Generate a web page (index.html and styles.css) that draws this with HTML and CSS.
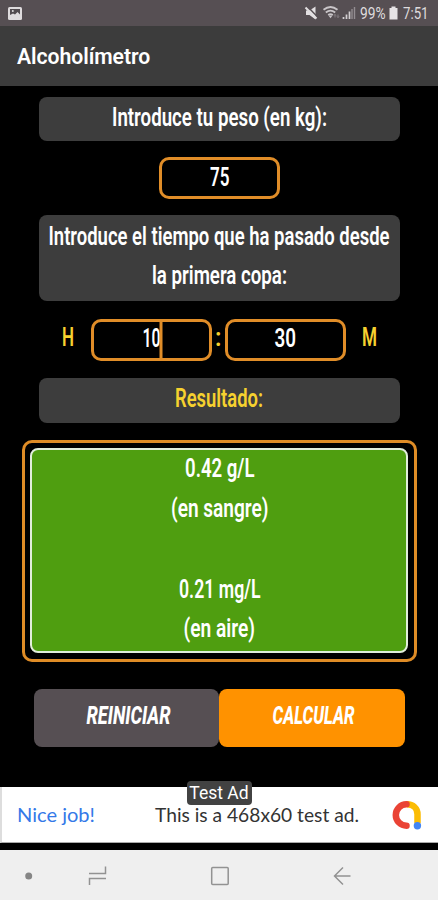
FILE: index.html
```html
<!DOCTYPE html>
<html lang="es">
<head>
<meta charset="utf-8">
<title>Alcoholímetro</title>
<link rel="stylesheet" href="styles.css">
</head>
<body>
<div class="screen">
  <header class="status">
    <svg class="picture-icon" width="14" height="13" viewBox="0 0 14 13"><rect width="14" height="13" rx="1.5" fill="#dedbdd"/><path d="M2 2h10v5.500L9.500 5 7 7.500 5 6.500 2 8z" fill="#514b4f"/><circle cx="4.800" cy="4" r="1" fill="#dedbdd"/></svg>
    <svg class="tray" width="138" height="26" viewBox="300 0 138 26">
      <path d="M306 10.500h3.500l6-4v13l-6-4.500H306z" fill="#e2dfe1"/>
      <path d="M307 6l11.500 12" stroke="#564f53" stroke-width="1.500"/>
      <path d="M305.500 7.500l11 11" stroke="#e2dfe1" stroke-width="2"/>
      <g fill="none" stroke="#c9c5c8" stroke-width="1.800"><path d="M323.500 9.700q7-5.500 14 0M325.800 12.500q4.700-3.800 9.400 0M328.200 15q2.300-1.800 4.600 0"/></g>
      <path d="M328.500 15.500h4l-2 2.800z" fill="#c9c5c8"/>
      <path d="M335 17.500v-3m-1 1 1-1 1 1M338 14.500v3m-1-1 1 1 1-1" stroke="#9a9498" stroke-width=".7" fill="none"/>
      <path d="M343.500 19v-2M346.500 19v-4.500M349.500 19v-7.500" stroke="#d2ced1" stroke-width="1.700"/><path d="M352 19V9M354.500 19V7" stroke="#938d91" stroke-width="1.400"/>
      <text x="360" y="19.300" textLength="25.500" lengthAdjust="spacingAndGlyphs">99%</text>
      <path d="M389.500 8h2V6.500h4V8h2v11.500h-8z" fill="#e6e3e5"/>
      <text x="403" y="19.300" textLength="25.500" lengthAdjust="spacingAndGlyphs">7:51</text>
    </svg>
  </header>
  <h1 class="appbar">Alcoholímetro</h1>
  <main>
    <div class="panel weight-label"><svg class="type" width="361" height="44"><text x="73" y="29" textLength="215" lengthAdjust="spacingAndGlyphs">Introduce tu peso (en kg):</text></svg></div>
    <div class="field weight-field"><svg class="type" width="115" height="36"><text x="48" y="25.500" textLength="19.500" lengthAdjust="spacingAndGlyphs">75</text></svg></div>
    <div class="panel time-label"><svg class="type" width="361" height="85"><text x="9.500" y="29.500" textLength="341" lengthAdjust="spacingAndGlyphs">Introduce el tiempo que ha pasado desde</text><text x="113" y="69" textLength="135" lengthAdjust="spacingAndGlyphs">la primera copa:</text></svg></div>
    <div class="time">
      <svg class="type yellow" width="30" height="42"><text x="1" y="27" textLength="12" lengthAdjust="spacingAndGlyphs">H</text></svg>
      <div class="field"><svg class="type" width="115" height="36"><text x="48.500" y="24.500" textLength="18" lengthAdjust="spacingAndGlyphs">10</text><path class="caret" d="M67 0v36"/></svg></div>
      <svg class="type yellow" width="13" height="42"><text x="3" y="27" textLength="6.500" lengthAdjust="spacingAndGlyphs">:</text></svg>
      <div class="field"><svg class="type" width="115" height="36"><text x="46.500" y="24.500" textLength="21.500" lengthAdjust="spacingAndGlyphs">30</text></svg></div>
      <svg class="type yellow" width="31" height="42"><text x="16" y="27" textLength="15" lengthAdjust="spacingAndGlyphs">M</text></svg>
    </div>
    <div class="panel result-label"><svg class="type yellow" width="361" height="45"><text x="136" y="29" textLength="88" lengthAdjust="spacingAndGlyphs">Resultado:</text></svg></div>
    <div class="result"><div class="reading"><svg class="type" width="374" height="202">
      <text x="153" y="27" textLength="69.500" lengthAdjust="spacingAndGlyphs">0.42 g/L</text>
      <text x="139" y="66.500" textLength="97.500" lengthAdjust="spacingAndGlyphs">(en sangre)</text>
      <text x="147" y="147.500" textLength="81.500" lengthAdjust="spacingAndGlyphs">0.21 mg/L</text>
      <text x="151.500" y="187" textLength="71.500" lengthAdjust="spacingAndGlyphs">(en aire)</text>
    </svg></div></div>
    <div class="actions">
      <button class="reset"><svg class="type slanted" width="185" height="58"><text x="52.500" y="35" textLength="84" lengthAdjust="spacingAndGlyphs">REINICIAR</text></svg></button>
      <button class="calculate"><svg class="type slanted" width="186" height="58"><text x="53.500" y="35" textLength="82" lengthAdjust="spacingAndGlyphs">CALCULAR</text></svg></button>
    </div>
  </main>
  <aside class="ad">
    <span class="ad-tag">Test Ad</span>
    <svg width="438" height="55" viewBox="0 787 438 55">
      <text class="nice" x="17" y="821.500" textLength="78" lengthAdjust="spacingAndGlyphs">Nice job!</text>
      <text class="copy" x="155" y="821.500" textLength="204" lengthAdjust="spacingAndGlyphs">This is a 468x60 test ad.</text>
      <g fill="none" stroke-width="6.500" stroke-linecap="round"><path d="M407 804.300c6 0 10.500 4 10.500 10v9" stroke="#fbbc04" stroke-linecap="butt"/><path d="M406.500 804.300a10.700 10.700 0 0 0 0 21.400" stroke="#ea4335"/></g><circle cx="417.400" cy="825.700" r="3.700" fill="#4285f4"/>
    </svg>
  </aside>
  <nav><svg width="438" height="50" viewBox="0 850 438 50" fill="none" stroke="#929292" stroke-width="1.500">
    <circle cx="28.700" cy="876" r="3.500" fill="#858585" stroke="none"/>
    <path d="M89 873.500h16.500V866.500M106 878.500H89.500V885"/>
    <rect x="211.700" y="867.500" width="16.500" height="17" rx="1"/>
    <path d="M350.500 876H335m8-8.500-8.500 8.500 8.500 8.500"/>
  </svg></nav>
</div>
</body>
</html>
```
FILE: styles.css
```css
* { box-sizing: border-box; }
body { margin: 0; background: #000; font-family: Roboto, sans-serif; }
svg { display: block; }
.screen { width: 438px; height: 900px; background: #000; overflow: hidden; display: flex; flex-direction: column; }
.status { height: 26px; flex: none; background: #564f53; display: flex; align-items: center; justify-content: space-between; padding-left: 7.5px; }
.tray text { font-size: 16px; fill: #dedbdd; }
.appbar { height: 60px; flex: none; margin: 0; padding: 1px 17px 0; background: #3c3c3c; color: #fff; font-size: 21.2px; font-weight: 600; letter-spacing: -.05px; line-height: 60px; }
main { height: 700.5px; flex: none; display: flex; flex-direction: column; align-items: center; padding-top: 10.5px; }
.panel { width: 361px; background: #3d3d3d; border-radius: 8px; flex: none; }
.type { overflow: visible; fill: #fff; font-size: 25.3px; font-weight: 600; }
.yellow { fill: #f6d12f; }
.field { width: 121px; height: 42px; border: 3px solid #e08d28; border-radius: 10px; flex: none; }
.caret { stroke: #e08d28; stroke-width: 3px; }
.weight-label { height: 44.5px; }
.weight-field { margin-top: 16px; }
.time-label { height: 85.5px; margin-top: 16px; }
.time { display: flex; margin-top: 18px; position: relative; left: -.5px; }
.result-label { height: 45px; margin-top: 17.5px; }
.result { width: 395px; height: 222px; margin-top: 16.500px; padding: 5.5px; border: 3px solid #df8c26; border-radius: 10px; flex: none; }
.reading { width: 378px; height: 205px; background: #4f9e10; border: 2px solid #e2eedb; border-radius: 8px; }
.actions { display: flex; margin-top: 27px; }
button { border: 0; padding: 0; height: 58.5px; border-radius: 8px; font-family: inherit; }
.reset { width: 185px; background: #564f53; }
.calculate { width: 186px; background: #ff9200; }
.slanted { font-style: italic; font-weight: 800; }
.ad { position: relative; height: 56px; flex: none; background: #fff; border-left: 2px solid #ddd; border-bottom: 1px solid #aaa; }
.ad svg { margin-left: -2px; }
.ad-tag { position: absolute; left: 184.500px; top: -5.5px; width: 65px; height: 23.5px; border-radius: 4px; background: #424242; color: #fff; font-size: 17.5px; line-height: 25px; text-align: center; }
.nice, .copy { font-family: Lato, sans-serif; font-size: 19px; }
.nice { fill: #3479e8; }
.copy { fill: #333; }
nav { height: 50.5px; margin-top: 7px; flex: none; background: #efefef; }
```
